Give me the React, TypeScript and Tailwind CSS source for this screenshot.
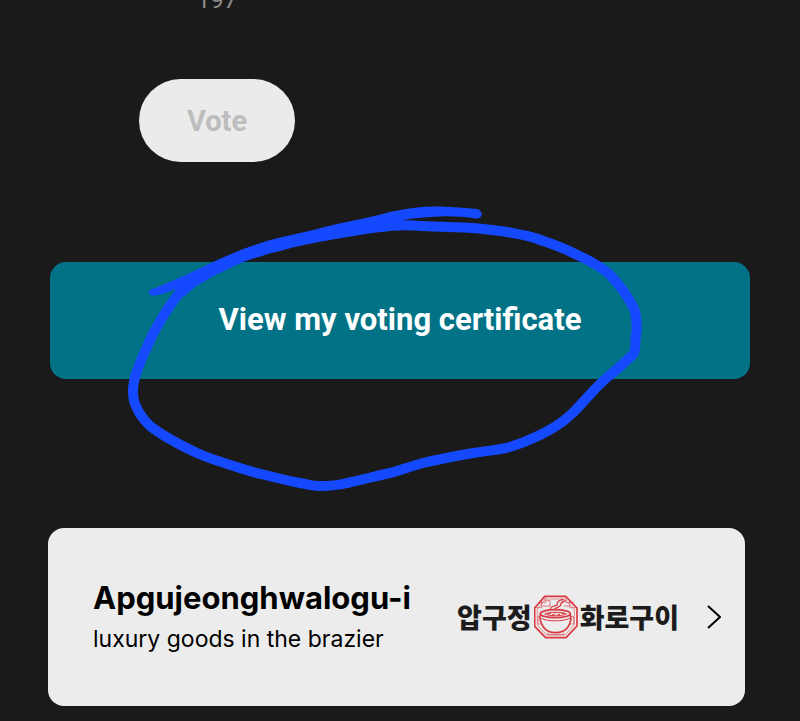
const VOTE_COUNT = 197;

const SPONSOR = {
  name: "Apgujeonghwalogu-i",
  tagline: "luxury goods in the brazier",
};

function BowlMark() {
  return (
    <svg viewBox="16 18 132 132" className="size-11 shrink-0" fill="none" stroke="#d9383f" aria-hidden="true">
      <path
        d="M48 22H111L145 57V111L112 146H51L18 112V57Z"
        strokeWidth="5"
        strokeLinejoin="round"
      />
      <path d="M50 30H108L137 60V108L109 138H54L26 109V60Z" strokeWidth="3" opacity="0.5" />
      {/* lattice corners */}
      <path
        d="M50 24V41H29M39 33V56H20M50 35H64V53M39 51H64M112 24V41H135M123 33V56H143M112 35H99M123 51H105"
        strokeWidth="3"
        opacity="0.6"
      />
      {/* steam */}
      <path
        d="M66 58C70 48 86 53 86 44C86 37 93 33 103 31M78 62C80 54 96 55 96 47C96 42 100 39 107 37"
        strokeWidth="4"
        strokeLinecap="round"
      />
      {/* bowl */}
      <path
        d="M36 74C30 90 37 103 44 114C51 124 62 131 80 131C99 131 111 124 118 114C125 103 130 90 124 74"
        fill="#ececec"
        strokeWidth="5"
      />
      <ellipse cx="80" cy="74" rx="45" ry="12" fill="#ececec" strokeWidth="5" />
      <path d="M48 75C62 68 99 68 113 75C99 82 62 82 48 75Z" strokeWidth="3" />
      <path d="M56 74H66M70 78H78M75 71H82M87 76H94M98 73H107" strokeWidth="4" />
      <path d="M38 88C56 98 104 98 123 88" strokeWidth="3" />
      <path d="M34 83H28V105H38M126 83H135V105H123M57 131V137H105V131" strokeWidth="3" opacity="0.6" />
    </svg>
  );
}

function SponsorLogo() {
  return (
    <div
      lang="ko"
      className="flex items-center gap-0.5 font-['Noto_Sans_CJK_KR',sans-serif] text-[27px] leading-10 font-black whitespace-nowrap text-[#1c1c1c]"
    >
      <span>압구정</span>
      <BowlMark />
      <span>화로구이</span>
    </div>
  );
}

function MarkerCircle() {
  return (
    <svg
      viewBox="120 200 560 300"
      className="pointer-events-none absolute -top-[62px] left-1/2 h-[300px] w-[560px] -translate-x-1/2"
      fill="none"
      stroke="#1549ff"
      strokeLinecap="round"
      strokeLinejoin="round"
      aria-hidden="true"
    >
      {/* overlapping start and end of the stroke */}
      <path
        d="M150 290C170 282 193 272 215 261C237 251 258 243 280 237.500C300 233 318 229 337 224C355 220 372 217 390 212C407 208 424 206 440 206.500C453 207 466 208 477 209C484 211 483 219 476 218.500C464 217 452 216 440 216.500C427 217 414 218 403 220C400 230 390 231 380 232C363 234 347 237 330 240C313 243 297 246 280 251C267 254 255 258 243 262C232 267 215 275 204 281C196 286 191 290 185 296L175 289C168 292 161 295 155 295.500C149 296 147 292.500 150 290Z"
        fill="#1549ff"
        stroke="none"
      />
      <path
        d="M380 227C394 225 408 225 423 226C440 227 456 227 473 228C484 229 496 230 507 232C517 234 526 235 535 238C546 242 556 245 567 250C577 255 585 258 593 263C600 267 605 270 610 275C616 281 623 290 628 298C633 306 636 311 636 318C637 325 637 329 636 335C635 342 636 348 634 353C632 356 629 358 627 360C622 365 616 370 610 375C605 379 601 383 597 387C593 391 588 397 583 402C578 408 573 413 567 418C559 425 550 430 540 435C530 440 520 444 510 447C498 450 486 451 473 453C456 456 440 459 423 463C412 466 401 470 390 473C376 476 361 480 347 483C335 486 330 486 320 486C313 486 307 484 300 483C284 480 269 476 253 472C234 466 215 461 197 453C180 445 164 437 150 426C143 419 139 414 136 406C133 401 133 396 133 390C133 385 134 382 135 377C139 363 145 352 150 340C153 333 155 330 158 325C164 314 171 303 181 291C188 285 194 281 204 276"
        strokeWidth="10"
      />
    </svg>
  );
}

export default function App() {
  return (
    <main className="min-h-screen bg-[#1a1a1a] pb-[15px] font-[Roboto,sans-serif]">
      <section className="grid grid-cols-2 gap-8 px-[50px]">
        <div className="flex flex-col items-center">
          <p className="flex h-3 items-end overflow-hidden text-2xl leading-6 text-[#8c8c8c]">{VOTE_COUNT}</p>
          <button
            type="button"
            disabled
            className="mt-[67px] rounded-full bg-[#ebebeb] px-12 pt-[23px] pb-[21px] text-[29px] leading-[39px] font-bold text-[#bdbdbd]"
          >
            Vote
          </button>
        </div>
      </section>

      <section className="relative mt-[100px] px-[50px]">
        <button
          type="button"
          className="w-full rounded-2xl bg-[#027387] px-4 pt-[37px] pb-[39px] text-[31px] leading-[41px] font-bold text-white"
        >
          View my voting certificate
        </button>
        <MarkerCircle />
      </section>

      <section className="mt-[149px] pr-[55px] pl-12">
        <a
          href="#sponsor"
          className="flex items-center justify-between rounded-2xl bg-[#ececec] py-12 pr-6 pl-[45px] font-[Inter,sans-serif] text-black"
        >
          <div className="whitespace-nowrap">
            <h2 className="text-[31px] leading-[44px] font-bold">{SPONSOR.name}</h2>
            <p className="text-[23px] leading-[38px]">{SPONSOR.tagline}</p>
          </div>
          <div className="flex items-center gap-7">
            <SponsorLogo />
            <svg viewBox="0 0 14 24" className="h-6 w-3.5" fill="none" stroke="currentColor" strokeWidth="2" aria-hidden="true">
              <path d="M1 1L13 12L1 23" />
            </svg>
          </div>
        </a>
      </section>
    </main>
  );
}
